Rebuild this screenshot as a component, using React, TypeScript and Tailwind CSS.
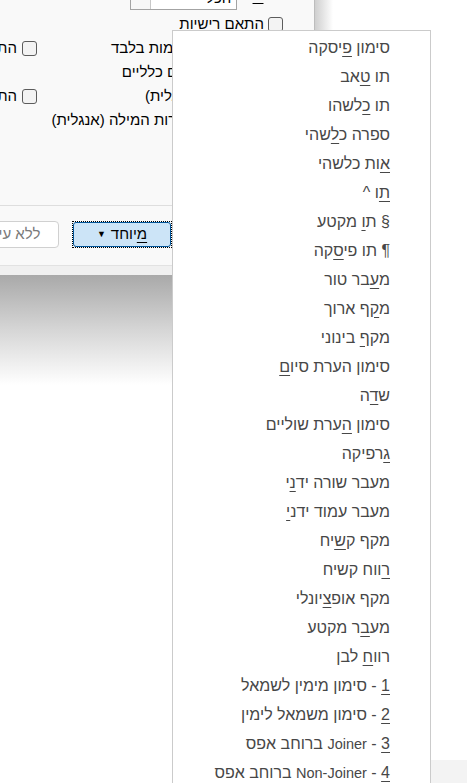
import type { ReactNode } from "react";

type MenuItem = [string, string, string];

const menuItems: MenuItem[] = [
  ["סימון ", "פ", "יסקה"],
  ["תו ", "ט", "אב"],
  ["תו ", "כ", "לשהו"],
  ["ספרה כ", "ל", "שהי"],
  ["", "א", "ות כלשהי"],
  ["", "ת", "ו ^"],
  ["§ ת", "ו", " מקטע"],
  ["¶ תו פי", "ס", "קה"],
  ["מ", "ע", "בר טור"],
  ["מ", "ק", "ף ארוך"],
  ["מק", "ף", " בינוני"],
  ["סימון הערת סיו", "ם", ""],
  ["ש", "ד", "ה"],
  ["סימון ", "ה", "ערת שוליים"],
  ["", "ג", "רפיקה"],
  ["מעבר שורה יד", "נ", "י"],
  ["מעבר עמוד ידנ", "י", ""],
  ["מקף ק", "ש", "יח"],
  ["", "ר", "ווח קשיח"],
  ["מקף אופ", "צ", "יונלי"],
  ["מע", "ב", "ר מקטע"],
  ["רוו", "ח", " לבן"],
  ["", "1", " - סימון מימין לשמאל"],
  ["", "2", " - סימון משמאל לימין"],
  ["", "3", " - Joiner ברוחב אפס"],
  ["", "4", " - Non-Joiner ברוחב אפס"],
];

// latin words look wider than in the original font, so shrink them a bit
function withLatin(text: string) {
  return text.split(/([A-Za-z][A-Za-z-]*)/).map((part, index) =>
    /^[A-Za-z]/.test(part) ? (
      <span key={index} className="text-[14.5px]">
        {part}
      </span>
    ) : (
      part
    ),
  );
}

function Key({ children }: { children: ReactNode }) {
  return <u className="underline underline-offset-[3px]">{children}</u>;
}

function Checkbox() {
  return (
    <span className="block h-[15px] w-[15px] shrink-0 rounded-[3px] border border-[#5c5c5c] bg-[#f3f3f3]" />
  );
}

function OptionRow({ right, left }: { right: string; left?: string }) {
  return (
    <div className="flex h-6 items-center">
      <div className="flex w-[246px] shrink-0 items-center gap-[4px]">
        <Checkbox />
        <span className="whitespace-nowrap">{right}</span>
      </div>
      {left && (
        <div className="flex items-center gap-[5px]">
          <Checkbox />
          <span className="whitespace-nowrap">{left}</span>
        </div>
      )}
    </div>
  );
}

export default function App() {
  return (
    <div className="relative h-[783px] w-[467px] overflow-hidden bg-white font-['Liberation_Sans','DejaVu_Sans',sans-serif] text-[15px] text-black">
      <div className="flex">
        {/* find dialog, options pane */}
        <div
          dir="rtl"
          className="flex h-[275px] w-[315px] shrink-0 flex-col border-r border-[#bdbdbd] bg-[#f9f9f9]"
        >
          <div className="mt-[-14px] flex h-6 items-center gap-[11px] pr-[24px]">
            <span className="mt-[-6px] whitespace-nowrap">
              חיפו<Key>ש</Key>:
            </span>
            <div className="flex h-6 w-[107px] items-center justify-between border border-[#a3a3a3] bg-white pr-[5px]">
              <span>הכל</span>
              <span className="h-full w-[20px] border-r border-[#c8c8c8] bg-[#f7f7f7]" />
            </div>
          </div>

          <div className="mt-[2px] pr-[31px]">
            <OptionRow right="התאם רישיות" />
            <OptionRow right="מצא מילים שלמות בלבד" left="התאם קידומת" />
            <OptionRow right="השתמש בתווים כלליים" />
            <OptionRow right="נשמע כמו (אנגלית)" left="התעלם מתווי פיסוק" />
            <OptionRow right="מצא את כל צורות המילה (אנגלית)" />
          </div>

          <div className="mt-[73px] h-px bg-[#dedede]" />

          <div className="mt-[15px] flex items-center gap-[13px] pr-[142px]">
            <div className="border border-dotted border-black">
              <button
                type="button"
                className="flex h-[25px] w-[98px] items-center justify-center gap-[5px] rounded-[3px] border border-[#005499] bg-[#cce4f7]"
              >
                <span>
                  <Key>מ</Key>יוחד
                </span>
                <span className="text-[9px]">▼</span>
              </button>
            </div>
            <button
              type="button"
              className="flex h-[27px] w-[100px] shrink-0 items-center justify-center whitespace-nowrap rounded-[4px] border border-[#d0d0d0] bg-white text-[#7a7a7a]"
            >
              ללא עיצוב
            </button>
          </div>

          <div className="mt-auto h-[10px] border-t border-[#e2e2e2] bg-[#f0f0f0]" />
        </div>
        <div className="h-[275px] w-[18px] bg-linear-to-r from-[#cfcfcf] to-white" />
      </div>
      <div className="h-[110px] w-[333px] bg-linear-to-b from-[#a9a9a9] via-[#d6d6d6] to-white" />

      <div className="absolute left-[431px] top-[760px] h-[23px] w-[36px] bg-[#f3f3f3]" />

      {/* special characters menu */}
      <div
        dir="rtl"
        className="absolute left-[172px] top-[30px] h-[770px] w-[259px] border border-[#cbcbcb] bg-white pr-[40px] pt-[2px] text-[16px] text-[#474747]"
      >
        {menuItems.map(([before, key, after], index) => (
          <div
            key={index}
            className="flex h-[29px] items-center whitespace-nowrap"
          >
            <span>
              {before}
              <Key>{key}</Key>
              {withLatin(after)}
            </span>
          </div>
        ))}
      </div>
    </div>
  );
}
